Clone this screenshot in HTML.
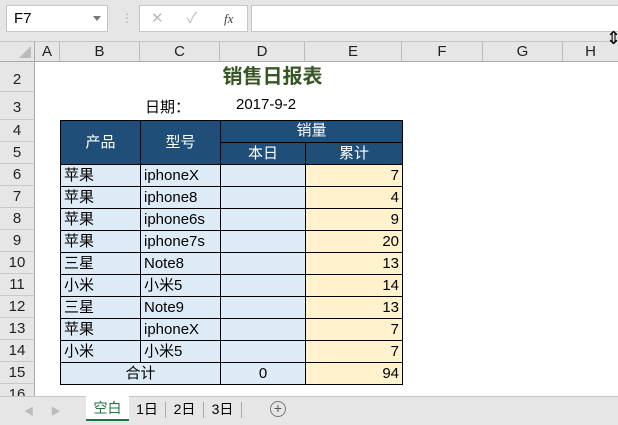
<!DOCTYPE html><html><head><meta charset="utf-8"><style>
*{margin:0;padding:0;box-sizing:border-box}
body{width:618px;height:425px;overflow:hidden;background:#fff;font-family:"Liberation Sans","Noto Sans CJK SC",sans-serif;position:relative;font-size:15px;color:#000}
.a{position:absolute}
.rh{position:absolute;left:0;width:35px;background:#e6e6e6;border-bottom:1px solid #c8c8c8;border-right:1px solid #aaa;text-align:center;font-size:15px;color:#222}
.ch{position:absolute;top:42px;height:20px;background:#e6e6e6;border-right:1px solid #bbb;border-bottom:1px solid #aaa;text-align:center;font-size:15px;line-height:20px;color:#222}
.c{position:absolute;border:1px solid #000;font-size:15px;padding:0 3px;white-space:nowrap}
.b{background:#ddebf7}.y{background:#fff2cc;text-align:right}.h{background:#1f4e78;color:#fff;text-align:center}
</style></head><body>
<div class="a" style="left:0;top:0;width:618px;height:42px;background:#e6e6e6;border-bottom:1px solid #c6c6c6"></div>
<div class="a" style="left:6px;top:5px;width:102px;height:27px;background:#fff;border:1px solid #c6c6c6;font-size:15px;line-height:25px;padding-left:7px">F7<span style="position:absolute;right:6px;top:10px;border:4px solid transparent;border-top:5px solid #777"></span></div>
<div class="a" style="left:121px;top:11px;color:#aaa;font-size:12px">⋮</div>
<div class="a" style="left:139px;top:5px;width:109px;height:27px;background:#fff;border:1px solid #c6c6c6;color:#bbb;font-size:15px;line-height:25px"><span style="position:absolute;left:11px">✕</span><span style="position:absolute;left:47px">✓</span><span style="position:absolute;left:84px;color:#444;font-family:'Liberation Serif',serif;font-style:italic;font-size:13px">fx</span></div>
<div class="a" style="left:251px;top:5px;width:367px;height:27px;background:#fff;border:1px solid #c6c6c6;border-right:none"></div>
<div class="a" style="left:0;top:42px;width:35px;height:20px;background:#e6e6e6;border-right:1px solid #aaa;border-bottom:1px solid #aaa"><span style="position:absolute;right:3px;bottom:3px;border-left:12px solid transparent;border-bottom:12px solid #bbb"></span></div>
<div class="ch" style="left:35px;width:25px">A</div><div class="ch" style="left:60px;width:80px">B</div><div class="ch" style="left:140px;width:80px">C</div><div class="ch" style="left:220px;width:85px">D</div><div class="ch" style="left:305px;width:97px">E</div><div class="ch" style="left:402px;width:81px">F</div><div class="ch" style="left:483px;width:80px">G</div><div class="ch" style="left:563px;width:55px;border-right:none">H</div>
<div class="a" style="left:606px;top:28px;font-size:18px;line-height:20px">⇕</div>
<div class="rh" style="top:62px;height:30px;line-height:36px">2</div>
<div class="rh" style="top:92px;height:28px;line-height:32px">3</div>
<div class="rh" style="top:120px;height:22px;line-height:22px">4</div>
<div class="rh" style="top:142px;height:22px;line-height:22px">5</div>
<div class="rh" style="top:164px;height:22px;line-height:22px">6</div>
<div class="rh" style="top:186px;height:22px;line-height:22px">7</div>
<div class="rh" style="top:208px;height:22px;line-height:22px">8</div>
<div class="rh" style="top:230px;height:22px;line-height:22px">9</div>
<div class="rh" style="top:252px;height:22px;line-height:22px">10</div>
<div class="rh" style="top:274px;height:22px;line-height:22px">11</div>
<div class="rh" style="top:296px;height:22px;line-height:22px">12</div>
<div class="rh" style="top:318px;height:22px;line-height:22px">13</div>
<div class="rh" style="top:340px;height:22px;line-height:22px">14</div>
<div class="rh" style="top:362px;height:22px;line-height:22px">15</div>
<div class="rh" style="top:384px;height:22px;line-height:22px">16</div>
<div class="a" style="left:140px;top:62px;width:265px;height:30px;text-align:center;font-size:20px;font-weight:bold;color:#375623;line-height:30px">销售日报表</div>
<div class="a" style="left:145px;top:96px;font-size:15px">日期：</div>
<div class="a" style="left:236px;top:96px;font-size:15px">2017-9-2</div>
<div class="c h" style="left:60px;top:120px;width:81px;height:45px;line-height:43px">产品</div>
<div class="c h" style="left:140px;top:120px;width:81px;height:45px;line-height:43px">型号</div>
<div class="c h" style="left:220px;top:120px;width:183px;height:23px;line-height:20px">销量</div>
<div class="c h" style="left:220px;top:142px;width:86px;height:23px;line-height:21px">本日</div>
<div class="c h" style="left:305px;top:142px;width:98px;height:23px;line-height:21px">累计</div>
<div id="rows"></div>
<script>
var d=[["苹果","iphoneX",7],["苹果","iphone8",4],["苹果","iphone6s",9],["苹果","iphone7s",20],["三星","Note8",13],["小米","小米5",14],["三星","Note9",13],["苹果","iphoneX",7],["小米","小米5",7]];
var h="";d.forEach(function(r,i){var t=164+i*22;
h+='<div class="c b" style="left:60px;top:'+t+'px;width:81px;height:23px;line-height:21px">'+r[0]+'</div>';
h+='<div class="c b" style="left:140px;top:'+t+'px;width:81px;height:23px;line-height:21px">'+r[1]+'</div>';
h+='<div class="c b" style="left:220px;top:'+t+'px;width:86px;height:23px"></div>';
h+='<div class="c y" style="left:305px;top:'+t+'px;width:98px;height:23px;line-height:21px">'+r[2]+'</div>';});
h+='<div class="c b" style="left:60px;top:362px;width:161px;height:23px;line-height:21px;text-align:center">合计</div>';
h+='<div class="c b" style="left:220px;top:362px;width:86px;height:23px;line-height:21px;text-align:center">0</div>';
h+='<div class="c y" style="left:305px;top:362px;width:98px;height:23px;line-height:21px">94</div>';
document.getElementById("rows").innerHTML=h;
</script>
<div class="a" style="left:0;top:396px;width:618px;height:29px;background:#e6e6e6;border-top:1px solid #c6c6c6;font-size:14px;color:#333"></div>
<div class="a" style="left:24px;top:403px;color:#bbb;font-size:10px">◀&nbsp;&nbsp;&nbsp;&nbsp;&nbsp;&nbsp;▶</div>
<div class="a" style="left:86px;top:396px;width:43px;height:25px;background:#fff;border-bottom:2px solid #217346;color:#217346;text-align:center;line-height:24px;font-size:14px">空白</div>
<div class="a" style="left:129px;top:402px;width:37px;height:16px;border-right:1px solid #aaa;text-align:center;font-size:14px;line-height:14px">1日</div>
<div class="a" style="left:166px;top:402px;width:38px;height:16px;border-right:1px solid #aaa;text-align:center;font-size:14px;line-height:14px">2日</div>
<div class="a" style="left:204px;top:402px;width:38px;height:16px;border-right:1px solid #aaa;text-align:center;font-size:14px;line-height:14px">3日</div>
<div class="a" style="left:270px;top:401px;width:16px;height:16px;border:1px solid #777;border-radius:50%;text-align:center;line-height:13px;font-size:14px;color:#555">+</div>
</body></html>
